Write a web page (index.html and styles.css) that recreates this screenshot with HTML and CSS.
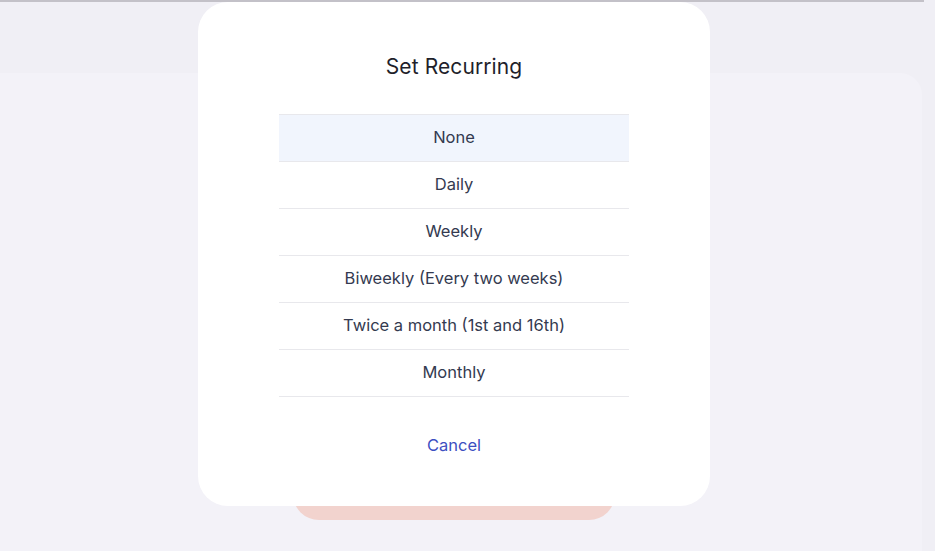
FILE: index.html
```html
<!DOCTYPE html>
<html>
<head>
<meta charset="utf-8">
<link rel="stylesheet" href="styles.css">
</head>
<body>
<div class="page">
  <div class="strip"></div>
  <div class="card">
    <div class="card-body"></div>
    <div class="pink-btn"></div>
  </div>
</div>
<div class="modal">
  <h2 class="title">Set Recurring</h2>
  <ul class="options">
    <li class="opt selected">None</li>
    <li class="opt">Daily</li>
    <li class="opt">Weekly</li>
    <li class="opt">Biweekly (Every two weeks)</li>
    <li class="opt">Twice a month (1st and 16th)</li>
    <li class="opt">Monthly</li>
  </ul>
  <div class="cancel">Cancel</div>
</div>
</body>
</html>
```
FILE: styles.css
```css
html, body {
  margin: 0;
  padding: 0;
  width: 935px;
  height: 551px;
  overflow: hidden;
  background: #f0eff5;
  font-family: Inter, "Noto Sans", sans-serif;
}
.page {
  display: flex;
  flex-direction: column;
  height: 551px;
}
.strip {
  height: 2px;
  width: 924px;
  background: #c3c1c8;
}
.card {
  margin-top: 71px;
  width: 922px;
  flex: 1;
  background: #f3f2f8;
  border-radius: 0 22px 0 0;
  display: flex;
  flex-direction: column;
  align-items: flex-start;
}
.card-body {
  height: 397px;
}
.pink-btn {
  margin-left: 293px;
  width: 322px;
  height: 50px;
  background: #f2d3ce;
  border-radius: 0 0 26px 26px;
}
.modal {
  position: absolute;
  left: 198px;
  top: 2px;
  width: 512px;
  height: 504px;
  box-sizing: border-box;
  background: #ffffff;
  border-radius: 30px;
  display: flex;
  flex-direction: column;
  align-items: center;
  padding-top: 51px;
}
.title {
  margin: 0;
  font-size: 21px;
  font-weight: 400;
  line-height: 28px;
  color: #1f1f2b;
  letter-spacing: 0.1px;
}
.options {
  list-style: none;
  margin: 33px 0 0 0;
  padding: 0;
  width: 350px;
  border-bottom: 1px solid #e8e8ec;
}
.opt {
  height: 46px;
  box-sizing: border-box;
  padding-bottom: 3px;
  border-top: 1px solid #e8e8ec;
  display: flex;
  align-items: center;
  justify-content: center;
  font-size: 16.5px;
  color: #343a50;
}
.opt + .opt {
  height: 47px;
}
.opt:first-child {
  height: 47px;
}
.opt.selected {
  background: #f1f5fd;
}
.cancel {
  margin-top: 36px;
  line-height: 24px;
  font-size: 16.5px;
  color: #3d4fc1;
}
```
